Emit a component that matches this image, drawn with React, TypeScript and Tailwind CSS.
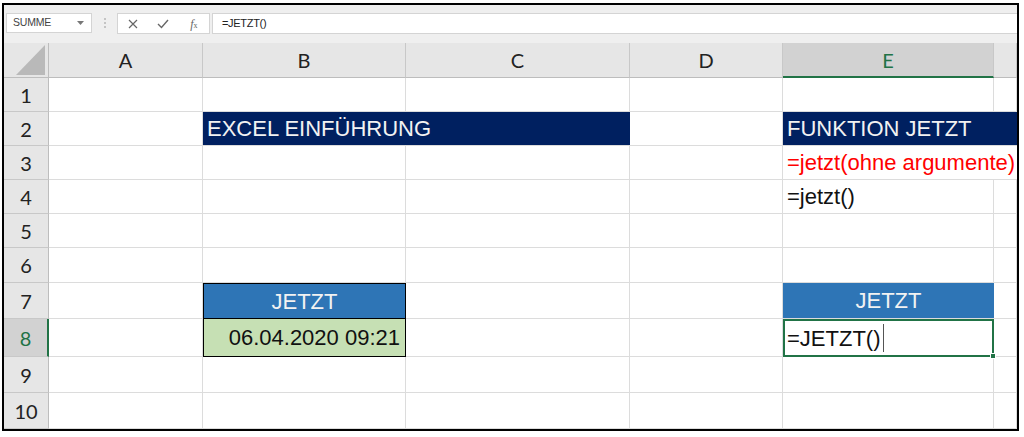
import React from "react";

const cols = ["A", "B", "C", "D", "E", "F"];
const rowHeights = [34, 34, 34, 34, 34, 35, 36, 38, 36, 36];

const grid = "border-r border-b border-[#dcdcdc]";
const cellFont = "font-['Liberation_Sans',Arial,sans-serif] text-[22px] whitespace-nowrap";

function Body() {
  const out: React.ReactNode[] = [];
  rowHeights.forEach((_, i) => {
    const r = i + 1;
    const sel = r === 8;
    out.push(
      <div
        key={`h${r}`}
        className={`flex items-center justify-center font-['Lato',sans-serif] text-[20px] border-b border-[#c8c8c8] ${
          sel
            ? "bg-[#d2d2d2] text-[#217346] border-r-2 border-r-[#217346]"
            : "bg-[#e6e6e6] text-[#222] border-r border-r-[#bdbdbd]"
        }`}
      >
        {r}
      </div>
    );
    // A
    out.push(<div key={`A${r}`} className={grid} />);
    // B,C
    if (r === 2) {
      out.push(
        <div
          key="B2"
          className={`col-span-2 bg-[#002060] flex items-center pl-[4px] text-[#f2f2f2] ${cellFont} border-b border-[#dcdcdc]`}
        >
          EXCEL EINFÜHRUNG
        </div>
      );
    } else if (r === 7) {
      out.push(
        <div
          key="B7"
          className={`bg-[#2e75b6] border border-black flex items-center justify-center text-[#f2f2f2] ${cellFont}`}
        >
          JETZT
        </div>
      );
      out.push(<div key="C7" className={grid} />);
    } else if (r === 8) {
      out.push(
        <div
          key="B8"
          className={`bg-[#c6e0b4] border-l border-r border-b border-black flex items-center justify-end pr-[5px] text-[#111] ${cellFont}`}
        >
          06.04.2020 09:21
        </div>
      );
      out.push(<div key="C8" className={grid} />);
    } else {
      out.push(<div key={`B${r}`} className={grid} />);
      out.push(<div key={`C${r}`} className={grid} />);
    }
    // D
    out.push(<div key={`D${r}`} className={grid} />);
    // E,F
    if (r === 2) {
      out.push(
        <div
          key="E2"
          className={`col-span-2 bg-[#002060] flex items-center pl-[4px] text-[#f2f2f2] ${cellFont} border-b border-[#dcdcdc]`}
        >
          FUNKTION JETZT
        </div>
      );
    } else if (r === 3) {
      out.push(
        <div
          key="E3"
          className={`col-span-2 overflow-hidden flex items-center pl-[4px] text-[#ff0000] ${cellFont} border-b border-[#dcdcdc]`}
        >
          =jetzt(ohne argumente)
        </div>
      );
    } else if (r === 4) {
      out.push(
        <div key="E4" className={`${grid} flex items-center pl-[4px] text-[#111] ${cellFont}`}>
          =jetzt()
        </div>
      );
      out.push(<div key="F4" className={grid} />);
    } else if (r === 7) {
      out.push(
        <div
          key="E7"
          className={`bg-[#2e75b6] border-b border-[#dcdcdc] flex items-center justify-center text-[#f2f2f2] ${cellFont}`}
        >
          JETZT
        </div>
      );
      out.push(<div key="F7" className={grid} />);
    } else if (r === 8) {
      out.push(
        <div
          key="E8"
          className={`relative border-2 border-[#217346] bg-white flex items-center pl-[2px] text-[#111] ${cellFont}`}
        >
          <span>=JETZT()</span>
          <span className="ml-[2px] w-[1px] h-[28px] bg-[#555]" />
          <span className="absolute -right-[4px] -bottom-[4px] w-[6px] h-[6px] bg-[#217346] border border-white" />
        </div>
      );
      out.push(<div key="F8" className={grid} />);
    } else {
      out.push(<div key={`E${r}`} className={grid} />);
      out.push(<div key={`F${r}`} className={grid} />);
    }
  });
  return <>{out}</>;
}

export default function App() {
  return (
    <div className="w-[1024px] h-[437px] bg-white pt-[3px] pl-[2px] pr-[5px] pb-[6px]">
      <div className="h-full border-2 border-black flex flex-col overflow-hidden">
        {/* formula bar */}
        <div className="h-[38px] shrink-0 bg-[#efefef] flex items-start pt-[8px] font-['Liberation_Sans',Arial,sans-serif]">
          <div className="ml-[2px] w-[86px] h-[20px] bg-white border border-[#d4d4d4] flex items-center justify-between pl-[6px] pr-[7px]">
            <span className="text-[10.5px] text-[#444] tracking-[-0.2px]">SUMME</span>
            <svg width="7" height="4" viewBox="0 0 7 4">
              <polygon points="0,0 7,0 3.5,4" fill="#777" />
            </svg>
          </div>
          <div className="w-[25px] h-[20px] flex flex-col items-center justify-center gap-[2px]">
            <span className="w-[2px] h-[2px] bg-[#c4c4c4]" />
            <span className="w-[2px] h-[2px] bg-[#c4c4c4]" />
            <span className="w-[2px] h-[2px] bg-[#c4c4c4]" />
          </div>
          <div className="w-[93px] h-[21px] bg-white border border-[#d4d4d4] flex items-center">
            <div className="w-[31px] flex justify-center">
              <svg width="10" height="10" viewBox="0 0 10 10">
                <path d="M1 1 L9 9 M9 1 L1 9" stroke="#666" strokeWidth="1.2" fill="none" />
              </svg>
            </div>
            <div className="w-[31px] flex justify-center">
              <svg width="12" height="10" viewBox="0 0 12 10">
                <path d="M1 5 L4.5 8.5 L11 1" stroke="#666" strokeWidth="1.4" fill="none" />
              </svg>
            </div>
            <div className="w-[31px] flex justify-center">
              <span className="font-['Liberation_Serif',serif] italic text-[12px] text-[#666] leading-none">
                f<span className="text-[8px] not-italic">x</span>
              </span>
            </div>
          </div>
          <div className="ml-[2px] flex-1 h-[21px] bg-white border-y border-l border-[#d4d4d4] flex items-center pl-[9px]">
            <span className="text-[11px] text-[#222] tracking-[-0.3px]">=JETZT()</span>
          </div>
        </div>
        {/* sheet */}
        <div className="grid grid-cols-[45px_154px_203px_224px_153px_211px_23px] grid-rows-[35px_34px_34px_34px_34px_34px_35px_36px_38px_36px_36px] bg-white">
          <div className="bg-[#e6e6e6] border-r border-b border-[#bdbdbd] flex items-end justify-end pr-[3px] pb-[2px]">
            <svg width="29" height="30" viewBox="0 0 29 30">
              <polygon points="29,0 29,30 0,30" fill="#b9b9b9" />
            </svg>
          </div>
          {cols.map((c) => {
            const sel = c === "E";
            return (
              <div
                key={c}
                className={`flex items-center justify-center font-['Lato',sans-serif] text-[20px] border-r border-[#c8c8c8] ${
                  sel
                    ? "bg-[#d2d2d2] text-[#217346] border-b-2 border-b-[#217346]"
                    : "bg-[#e6e6e6] text-[#222] border-b border-b-[#bdbdbd]"
                }`}
              >
                {c === "F" ? "" : c}
              </div>
            );
          })}
          <Body />
        </div>
      </div>
    </div>
  );
}
